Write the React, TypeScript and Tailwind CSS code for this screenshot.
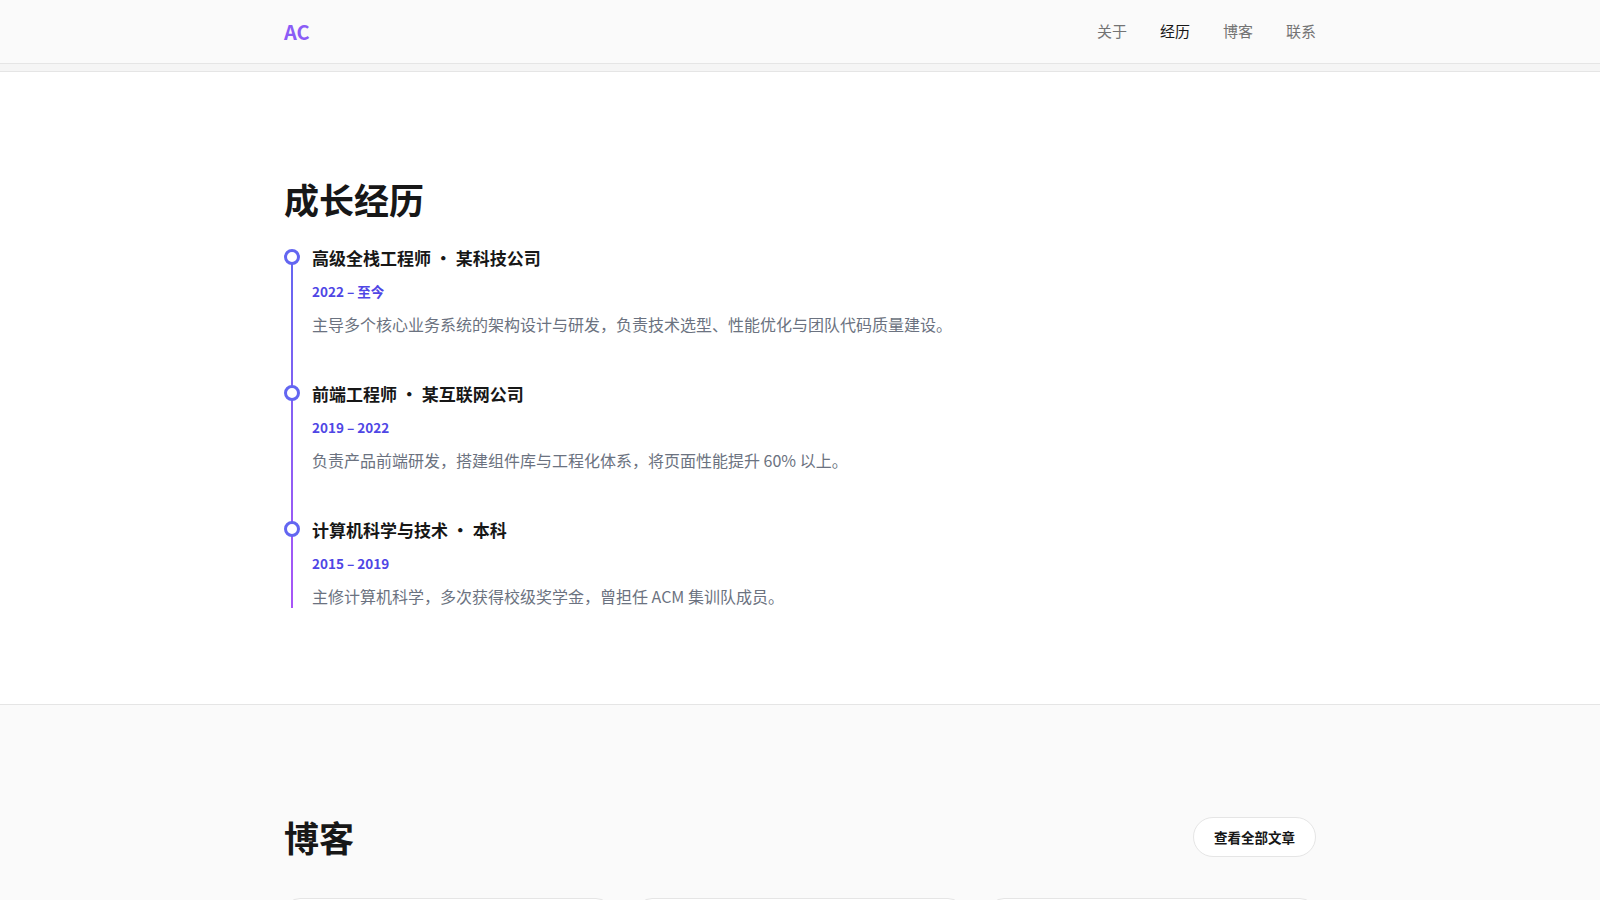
const items = [
  { title: '高级全栈工程师', org: '某科技公司', date: '2022 – 至今', desc: '主导多个核心业务系统的架构设计与研发，负责技术选型、性能优化与团队代码质量建设。' },
  { title: '前端工程师', org: '某互联网公司', date: '2019 – 2022', desc: '负责产品前端研发，搭建组件库与工程化体系，将页面性能提升 60% 以上。' },
  { title: '计算机科学与技术', org: '本科', date: '2015 – 2019', desc: '主修计算机科学，多次获得校级奖学金，曾担任 ACM 集训队成员。' },
];

export default function App() {
  return (
    <div className="min-h-screen bg-white text-[#171717]" style={{ fontFamily: '"Noto Sans CJK SC", "Noto Sans", sans-serif' }}>
      <header className="h-16 bg-[#fafafa] border-b border-[#e5e5e5]">
        <div className="mx-auto w-[1032px] h-full flex items-center justify-between">
          <span className="text-xl font-bold text-[#8b5cf6]">AC</span>
          <nav className="flex gap-[33px] text-[15px] text-[#737373]">
            <span>关于</span>
            <span className="text-[#171717]">经历</span>
            <span>博客</span>
            <span>联系</span>
          </nav>
        </div>
      </header>
      <div className="h-2 bg-[#f5f5f5] border-b border-[#e5e5e5]" />
      <section className="pt-[109px] pb-[96px]">
        <div className="mx-auto w-[1032px]">
          <h2 className="text-[35px] font-bold leading-none mb-7">成长经历</h2>
          <div className="relative pl-7">
            <div className="absolute left-[7px] top-2 bottom-0 w-[2px] bg-gradient-to-b from-[#6366f1] to-[#a855f7]" />
            <div className="flex flex-col gap-[44px]">
              {items.map((it) => (
                <div key={it.title} className="relative">
                  <div className="absolute -left-7 top-[5px] w-4 h-4 rounded-full border-[3px] border-[#6366f1] bg-white" />
                  <h3 className="text-[17px] font-bold leading-7">{it.title} · {it.org}</h3>
                  <p className="mt-[9px] text-[13.5px] font-semibold text-[#4f46e5] leading-5">{it.date}</p>
                  <p className="mt-[11px] text-base text-[#6b7280] leading-6">{it.desc}</p>
                </div>
              ))}
            </div>
          </div>
        </div>
      </section>
      <section className="bg-[#fafafa] border-t border-[#e5e5e5] pt-[106px] pb-20">
        <div className="mx-auto w-[1032px]">
          <div className="flex items-center justify-between">
            <h2 className="text-[35px] font-bold">博客</h2>
            <button className="h-10 px-5 rounded-full border border-[#e5e5e5] bg-white text-[13.5px] font-semibold">查看全部文章</button>
          </div>
          <div className="mt-[34px] grid grid-cols-3 gap-6">
            {[0, 1, 2].map((i) => (
              <div key={i} className="h-48 rounded-2xl border border-[#e5e5e5] bg-white" />
            ))}
          </div>
        </div>
      </section>
    </div>
  );
}
